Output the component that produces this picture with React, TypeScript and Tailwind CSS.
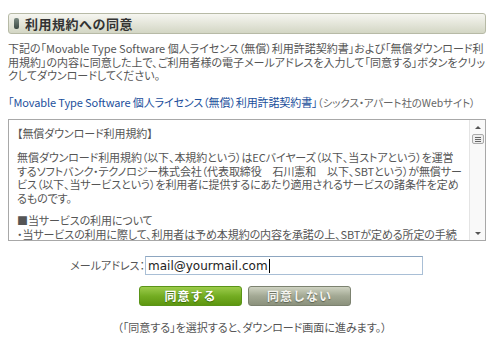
const jp = { fontFamily: '"Noto Sans CJK JP", "DejaVu Sans", sans-serif' };

const ScrollBar: React.FC = () => {
  return (
    <div className="flex flex-col items-center w-[16px] border-l border-[#e4e4e4] bg-[#f9f9f9]">
      <div className="h-[14px] w-full flex items-center justify-center">
        <span className="w-0 h-0 border-l-[3px] border-r-[3px] border-b-[3px] border-l-transparent border-r-transparent border-b-[#555]"></span>
      </div>
      <div className="w-[12px] h-[10px] border border-[#aaa] rounded-[2px] bg-[#eee] flex flex-col items-center justify-center gap-[1px]">
        <span className="w-[6px] h-px bg-[#666]"></span>
        <span className="w-[6px] h-px bg-[#666]"></span>
        <span className="w-[6px] h-px bg-[#666]"></span>
      </div>
      <div className="flex-1"></div>
      <div className="h-[14px] w-full flex items-center justify-center">
        <span className="w-0 h-0 border-l-[3px] border-r-[3px] border-t-[3px] border-l-transparent border-r-transparent border-t-[#555]"></span>
      </div>
    </div>
  );
};

export default function App() {
  return (
    <div className="w-[500px] h-[338px] bg-white overflow-hidden pt-[13px] px-[8px] text-[#555]" style={jp}>
      {/* heading */}
      <div className="w-[478px] h-[21px] flex items-center gap-[6px] pl-[5px] rounded-[3px] border border-[#b7baa6] bg-gradient-to-b from-[#f6f6f1] to-[#d3d6c4]">
        <span className="w-[5px] h-[11px] rounded-[2px] bg-gradient-to-b from-[#7b8a82] to-[#3d4a44]"></span>
        <span className="text-[13px] font-bold text-[#333] leading-none tracking-[0.5px]">利用規約への同意</span>
      </div>

      <p className="mt-[8px] text-[11px] leading-[13.5px] [font-feature-settings:'palt']">
        下記の「Movable Type Software 個人ライセンス（無償）利用許諾契約書」および「無償ダウンロード利用規約」の内容に同意した上で、ご利用者様の電子メールアドレスを入力して「同意する」ボタンをクリックしてダウンロードしてください。
      </p>

      <p className="mt-[13px] text-[11px] leading-[13.5px] tracking-[-0.1px] [font-feature-settings:'palt']">
        <span className="text-[#1b4f9c]">「Movable Type Software 個人ライセンス（無償）利用許諾契約書」</span>
        <span className="text-[#666] text-[10.5px]">（シックス・アパート社のWebサイト）</span>
      </p>

      {/* terms box */}
      <div className="mt-[10px] w-[478px] h-[122px] border border-[#a8a8a8] flex overflow-hidden">
        <div className="flex-1 overflow-hidden pt-[7px] pl-[8px] pr-[6px] text-[11px] leading-[13.5px] tracking-[-0.1px] [font-feature-settings:'palt']">
          <p>【無償ダウンロード利用規約】</p>
          <p className="mt-[10.5px]">
            無償ダウンロード利用規約（以下、本規約という）はECバイヤーズ（以下、当ストアという）を運営するソフトバンク・テクノロジー株式会社（代表取締役　石川憲和　以下、SBTという）が無償サービス（以下、当サービスという）を利用者に提供するにあたり適用されるサービスの諸条件を定めるものです。
          </p>
          <p className="mt-[9px]">■当サービスの利用について</p>
          <p>・当サービスの利用に際して、利用者は予め本規約の内容を承諾の上、SBTが定める所定の手続きに従うものとします。</p>
        </div>
        <ScrollBar />
      </div>

      {/* email */}
      <div className="mt-[15px] flex items-center">
        <span className="w-[137px] text-right text-[11px] [font-feature-settings:'palt']">メールアドレス：</span>
        <div className="w-[278px] h-[19px] border border-[#a9bfd6] border-t-[#8da6c0] flex items-center px-[2px]">
          <span className="text-[#222] leading-none" style={{ fontFamily: '"DejaVu Sans", sans-serif', fontSize: '12px' }}>mail@yourmail.com</span>
          <span className="w-px h-[14px] bg-black ml-px"></span>
        </div>
      </div>

      {/* buttons */}
      <div className="mt-[11px] flex gap-[6px] ml-[131px]">
        <button className="w-[103px] h-[20px] rounded-[3px] border border-[#5a9418] bg-gradient-to-b from-[#9ccc4a] via-[#74ad22] to-[#5d960f] text-white text-[12px] font-bold tracking-[1px] leading-none [text-shadow:0_1px_1px_#3a6a08]">
          同意する
        </button>
        <button className="w-[103px] h-[20px] rounded-[3px] border border-[#7c8270] bg-gradient-to-b from-[#cfd3c2] via-[#a3a994] to-[#8b917c] text-[#f4f4f0] text-[12px] font-bold tracking-[1px] leading-none [text-shadow:0_1px_1px_#5c6250]">
          同意しない
        </button>
      </div>

      <p className="mt-[13px] text-center text-[11px] [font-feature-settings:'palt'] pl-[4px]">
        （「同意する」を選択すると、ダウンロード画面に進みます。）
      </p>
    </div>
  );
}
